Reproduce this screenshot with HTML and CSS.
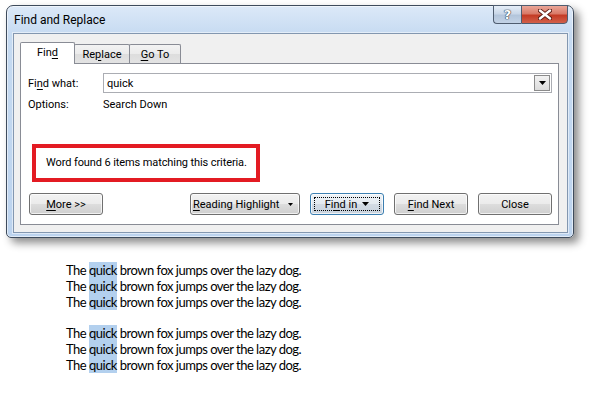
FILE: index.html
```html
<!DOCTYPE html>
<html>
<head>
<meta charset="utf-8">
<link rel="stylesheet" href="styles.css">
</head>
<body>
<div class="window">
  <div class="titlebar">
    <span class="title">Find and Replace</span>
    <div class="caps">
      <div class="cap help">?</div>
      <div class="cap close">
        <svg width="14" height="11" viewBox="0 0 14 11"><path d="M2 1.5 L12 9.5 M12 1.5 L2 9.5" stroke="#5a1a12" stroke-width="4.2" stroke-linecap="round"/><path d="M2 1.5 L12 9.5 M12 1.5 L2 9.5" stroke="#ffffff" stroke-width="2.4" stroke-linecap="round"/></svg>
      </div>
    </div>
  </div>
  <div class="client">
    <div class="tabs">
      <div class="tab active">Fin<u>d</u></div>
      <div class="tab">Re<u>p</u>lace</div>
      <div class="tab"><u>G</u>o To</div>
    </div>
    <div class="panel">
      <div class="find-row">
        <span class="lbl">Fi<u>n</u>d what:</span>
        <div class="combo">
          <span class="combo-text">quick</span>
          <div class="drop"><svg width="7" height="4" viewBox="0 0 7 4"><path d="M0 0 H7 L3.5 4 Z" fill="#000"/></svg></div>
        </div>
      </div>
      <div class="opt-row">
        <span class="lbl">Options:</span>
        <span>Search Down</span>
      </div>
      <div class="status">Word found 6 items matching this criteria.</div>
      <div class="buttons">
        <div class="btn more"><span><u>M</u>ore &gt;&gt;</span></div>
        <div class="btn reading"><span><u>R</u>eading Highlight</span><svg width="5" height="3" viewBox="0 0 5 3"><path d="M0 0 H5 L2.5 3 Z" fill="#000"/></svg></div>
        <div class="btn findin"><div class="focus"><span>Fi<u>n</u>d in</span><svg width="7" height="4" viewBox="0 0 7 4"><path d="M0 0 H7 L3.5 4 Z" fill="#000"/></svg></div></div>
        <div class="btn"><span><u>F</u>ind Next</span></div>
        <div class="btn"><span>Close</span></div>
      </div>
    </div>
  </div>
</div>
<div class="doc">
  <p>The <span class="hl">quick</span> brown fox jumps over the lazy dog.<br>The <span class="hl">quick</span> brown fox jumps over the lazy dog.<br>The <span class="hl">quick</span> brown fox jumps over the lazy dog.</p>
  <p>The <span class="hl">quick</span> brown fox jumps over the lazy dog.<br>The <span class="hl">quick</span> brown fox jumps over the lazy dog.<br>The <span class="hl">quick</span> brown fox jumps over the lazy dog.</p>
</div>
</body>
</html>
```
FILE: styles.css
```css
html, body {
  margin: 0;
  background: #ffffff;
}
body {
  padding: 5px 0 0 6px;
  font-family: Roboto, "Open Sans", sans-serif;
  font-size: 11px;
  color: #000;
}
u { text-decoration: underline; text-underline-offset: 2px; }
.window {
  width: 568px;
  height: 233px;
  box-sizing: border-box;
  border: 1px solid #3e4b5c;
  border-radius: 7px 7px 5px 5px;
  background: linear-gradient(#dce9f8, #c5daf1 30px, #bcd3ee);
  box-shadow: 5px 5px 9px rgba(0,0,0,0.45), inset 0 0 0 1px rgba(255,255,255,0.55);
  display: flex;
  flex-direction: column;
}
.titlebar {
  height: 27px;
  display: flex;
  align-items: flex-start;
}
.title {
  font-size: 12px;
  margin: 7px 0 0 7px;
  color: #000;
}
.caps {
  margin-left: auto;
  margin-right: 5px;
  display: flex;
  margin-top: -1px;
}
.cap {
  height: 19px;
  box-sizing: border-box;
  border: 1px solid #4f5d70;
  display: flex;
  align-items: center;
  justify-content: center;
}
.help {
  width: 28px;
  border-right: none;
  border-radius: 0 0 0 4px;
  background: linear-gradient(#e6eef8, #c9d7e8 45%, #b3c5db 55%, #c3d3e6);
  color: #fff;
  font-family: "DejaVu Sans", sans-serif;
  font-weight: bold;
  font-size: 13px;
  text-shadow: 0 0 1px #2c3a4c, 0 0 1px #2c3a4c, 0 0 1px #2c3a4c;
}
.close {
  width: 47px;
  border-radius: 0 0 4px 0;
  background: linear-gradient(#eaa698, #d97a68 45%, #c43b25 55%, #d2604a);
}
.client {
  margin: 0 5px 4px 6px;
  flex: 1;
  background: #f0f0f0;
  border: 1px solid #8397b0;
  box-shadow: 0 0 0 1px rgba(255,255,255,0.5);
  display: flex;
  flex-direction: column;
  padding: 8px 8px 7px 6px;
}
.tabs {
  display: flex;
  align-items: flex-end;
  height: 21px;
  position: relative;
  z-index: 1;
}
.tab {
  height: 19px;
  box-sizing: border-box;
  border: 1px solid #898c95;
  border-bottom: none;
  border-radius: 2px 2px 0 0;
  background: linear-gradient(#f3f3f3, #ebebeb 50%, #dddddd 51%, #e3e3e3);
  display: flex;
  align-items: center;
  justify-content: center;
  margin-left: -1px;
}
.tab:nth-child(2) { width: 56px; }
.tab:nth-child(3) { width: 52px; }
.tab.active {
  width: 55px;
  height: 22px;
  margin-bottom: -1px;
  margin-left: 0;
  background: #fff;
  padding-bottom: 2px;
  z-index: 2;
}
.panel {
  flex: 1;
  background: #fff;
  border: 1px solid #898c95;
  display: flex;
  flex-direction: column;
  padding: 9px 6px 9px 7px;
}
.find-row, .opt-row {
  display: flex;
  align-items: center;
}
.lbl {
  width: 75px;
  flex: none;
}
.combo {
  flex: 1;
  height: 20px;
  box-sizing: border-box;
  border: 1px solid #abadb3;
  display: flex;
  align-items: center;
  padding-left: 3px;
}
.combo-text { flex: 1; }
.drop {
  width: 16px;
  height: 16px;
  box-sizing: border-box;
  margin-right: 1px;
  border: 1px solid #8b8b8b;
  background: linear-gradient(#f2f2f2, #dcdcdc);
  display: flex;
  align-items: center;
  justify-content: center;
}
.opt-row {
  margin-top: 3px;
  height: 16px;
}
.status {
  margin: 32px 0 0 4px;
  width: 228px;
  height: 38px;
  box-sizing: border-box;
  border: 4px solid #e31b23;
  display: flex;
  align-items: center;
  padding-left: 10px;
  padding-bottom: 1px;
  white-space: nowrap;
  letter-spacing: -0.1px;
}
.buttons {
  margin-top: auto;
  display: flex;
  gap: 10px;
  margin-left: 1px;
}
.btn {
  width: 74px;
  height: 22px;
  box-sizing: border-box;
  border: 1px solid #707070;
  border-radius: 3px;
  background: linear-gradient(#f2f2f2, #ebebeb 50%, #dddddd 51%, #cfcfcf);
  display: flex;
  align-items: center;
  justify-content: center;
  box-shadow: inset 0 0 0 1px rgba(255,255,255,0.7);
}
.more { margin-right: auto; }
.reading {
  width: 110px;
  justify-content: space-between;
  padding: 0 6px 0 2px;
}
.findin {
  border-color: #3c7fb1;
  background: linear-gradient(#eef3f8, #e3e9ef 50%, #d3dbe4 51%, #c9d3de);
  padding: 3px;
}
.focus {
  flex: 1;
  align-self: stretch;
  border: 1px dotted #000;
  display: flex;
  align-items: center;
  justify-content: center;
  gap: 5px;
}
.doc {
  margin: 24px 0 0 60px;
  font-family: "Lato", sans-serif;
  font-size: 13px;
  letter-spacing: -0.5px;
  line-height: 16px;
  color: #000;
}
.doc p { margin: 0 0 15px; }
.hl {
  background: #b3d0ee;
  display: inline-block;
  line-height: 16px;
}
```
